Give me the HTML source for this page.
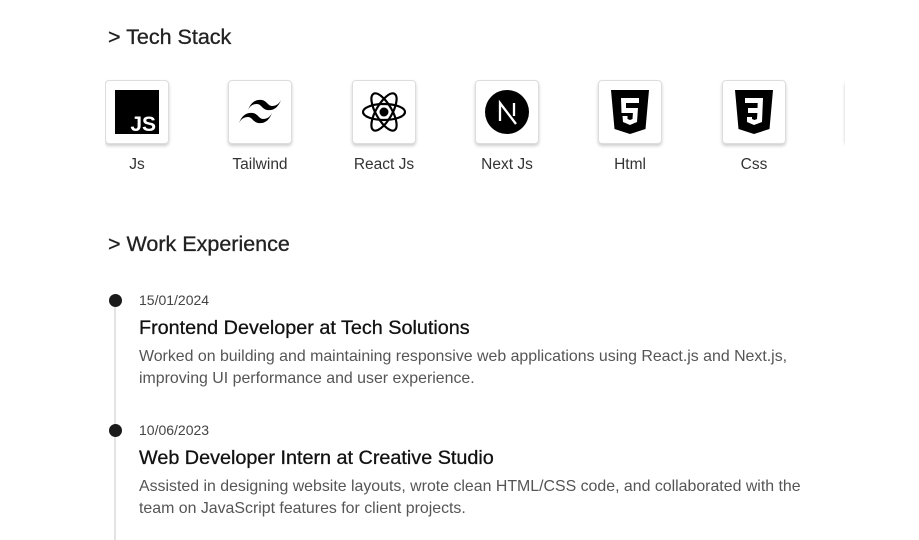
<!DOCTYPE html>
<html><head><meta charset="utf-8"><style>
*{margin:0;padding:0;box-sizing:border-box}
body{width:919px;height:540px;background:#fff;font-family:"Liberation Sans",sans-serif;color:#1a1a1a;overflow:hidden;position:relative}
h2{position:absolute;left:108px;font-size:21.5px;font-weight:400;color:#222;-webkit-text-stroke:0.3px #222}
.strip{position:absolute;left:105px;top:78px;width:740px;height:110px;overflow:hidden}
.item{position:absolute;top:0;width:64px;text-align:center}
.card{width:64px;height:64px;margin-top:2px;border:1px solid #ddd;border-radius:4px;box-shadow:0 2px 3px rgba(0,0,0,.2);display:flex;align-items:center;justify-content:center;background:#fff}
.lbl{font-size:15.5px;color:#333;margin-top:12px;white-space:nowrap;margin-left:-20px;width:104px}
.line{position:absolute;left:114px;top:300px;width:2px;height:240px;background:#e3e3e3}
.dot{position:absolute;left:109px;width:13px;height:13px;border-radius:50%;background:#1a1a1a}
.ent{position:absolute;left:139px;width:680px}
.date{font-size:14px;color:#444}
.title{font-size:19.8px;color:#111;margin-top:9px;-webkit-text-stroke:0.3px #111}
.desc{font-size:15.9px;color:#555;line-height:22px;margin-top:6px}
</style></head><body>
<h2 style="top:25px">&gt; Tech Stack</h2>
<div class="strip">
<div class="item" style="left:0"><div class="card"><svg width="44" height="44"><rect width="44" height="44" fill="#000"/><text x="41" y="41" font-family="Liberation Sans" font-weight="700" font-size="21" fill="#fff" text-anchor="end">JS</text></svg></div><div class="lbl">Js</div></div>
<div class="item" style="left:123px"><div class="card"><svg width="46" height="30" viewBox="0 0 46 30"><path d="M11 13c3-8 8-11 14-10 5 1 6 6 10 6 4 0 7-2 9-6-3 8-8 11-14 10-5-1-6-6-10-6-4 0-7 2-9 6zM2 26c3-8 8-11 14-10 5 1 6 6 10 6 4 0 7-2 9-6-3 8-8 11-14 10-5-1-6-6-10-6-4 0-7 2-9 6z" fill="#000"/></svg></div><div class="lbl">Tailwind</div></div>
<div class="item" style="left:247px"><div class="card"><svg width="46" height="42" viewBox="-23 -21 46 42"><g fill="none" stroke="#000" stroke-width="2.2"><ellipse rx="21" ry="8"/><ellipse rx="21" ry="8" transform="rotate(60)"/><ellipse rx="21" ry="8" transform="rotate(-60)"/></g><circle r="4.5" fill="#000"/></svg></div><div class="lbl">React Js</div></div>
<div class="item" style="left:370px"><div class="card"><svg width="44" height="44" viewBox="0 0 44 44"><circle cx="22" cy="22" r="22" fill="#000"/><path d="M15 31V13l16 21" stroke="#fff" stroke-width="2.3" fill="none"/><path d="M29 13v13" stroke="#fff" stroke-width="2.3"/></svg></div><div class="lbl">Next Js</div></div>
<div class="item" style="left:493px"><div class="card"><svg width="40" height="44" viewBox="0 0 40 44"><path d="M1 0h38l-3.5 39L20 44 4.5 39z" fill="#000"/><path d="M11 8h18v5H16v5h12l-1 14-7 3-7-3-.5-6h5v3l2.5 1 2.5-1 .4-6H11.5z" fill="#fff"/></svg></div><div class="lbl">Html</div></div>
<div class="item" style="left:617px"><div class="card"><svg width="40" height="44" viewBox="0 0 40 44"><path d="M1 0h38l-3.5 39L20 44 4.5 39z" fill="#000"/><path d="M11 8h18l-1 24-8 3-7-3v-5h5v2l2.5 1 2.5-1 .4-6H14v-5h9.5l.2-5H11z" fill="#fff"/></svg></div><div class="lbl">Css</div></div>
<div class="item" style="left:740px"><div class="card"></div></div>
</div>
<h2 style="top:232px">&gt; Work Experience</h2>
<div class="line"></div>
<div class="dot" style="top:294px"></div>
<div class="dot" style="top:424px"></div>
<div class="ent" style="top:292px"><div class="date">15/01/2024</div><div class="title">Frontend Developer at Tech Solutions</div><div class="desc">Worked on building and maintaining responsive web applications using React.js and Next.js, improving UI performance and user experience.</div></div>
<div class="ent" style="top:422px"><div class="date">10/06/2023</div><div class="title">Web Developer Intern at Creative Studio</div><div class="desc">Assisted in designing website layouts, wrote clean HTML/CSS code, and collaborated with the team on JavaScript features for client projects.</div></div>
</body></html>
